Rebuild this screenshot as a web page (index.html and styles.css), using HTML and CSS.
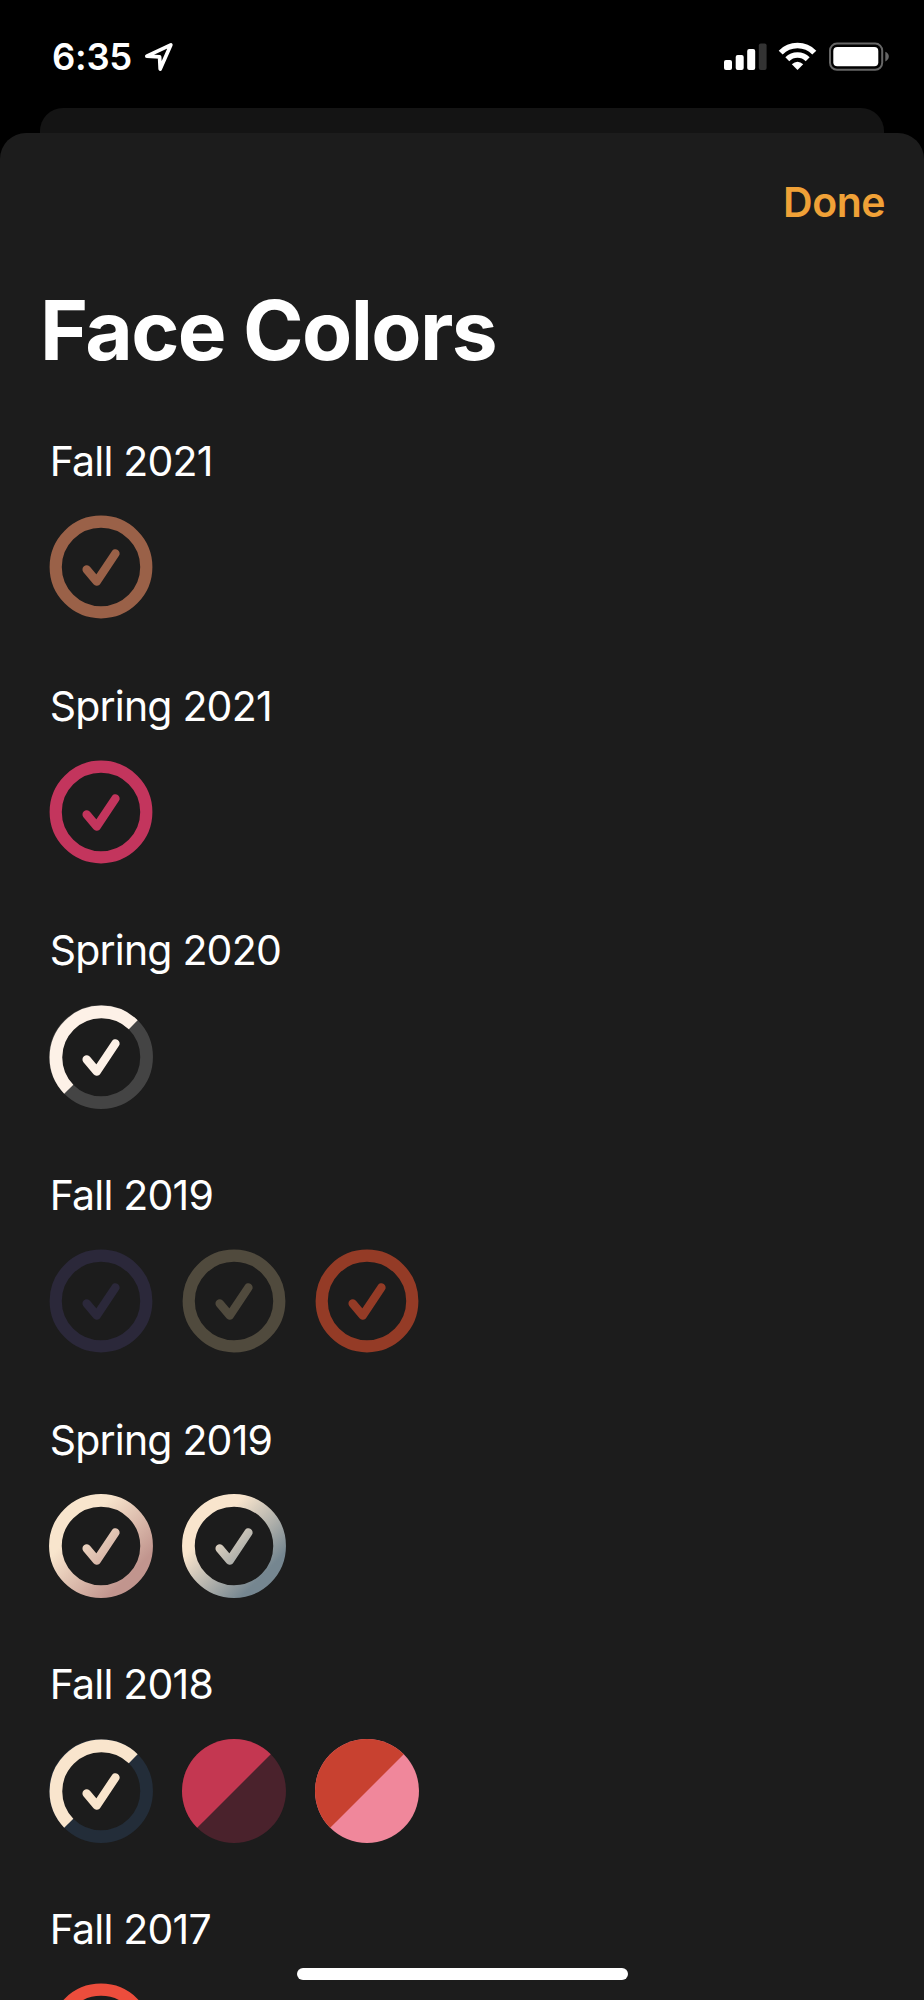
FILE: index.html
```html
<!DOCTYPE html>
<html lang="en">
<head>
<meta charset="utf-8">
<title>Face Colors</title>
<link rel="stylesheet" href="styles.css">
</head>
<body>
<svg class="defs" width="0" height="0" aria-hidden="true">
  <defs>
    <linearGradient id="rose" gradientUnits="userSpaceOnUse" x1="26" y1="26" x2="84" y2="84"><stop offset="0.1" stop-color="#f8e5cd"/><stop offset="0.95" stop-color="#c1958e"/></linearGradient>
    <linearGradient id="steel" gradientUnits="userSpaceOnUse" x1="26" y1="26" x2="84" y2="84"><stop offset="0.1" stop-color="#f9e5cd"/><stop offset="0.95" stop-color="#758690"/></linearGradient>
    <symbol id="full" viewBox="0 0 104 104"><circle cx="52" cy="52" r="45.3" fill="none" stroke="currentColor" stroke-width="12.2"/><path class="tick" d="M37.7 54.4 47.8 66.4 66.4 38.5"/></symbol>
    <symbol id="half" viewBox="0 0 104 104"><circle class="base" cx="52" cy="52" r="45.6" fill="none" stroke-width="12.7"/><path d="M19.76 84.24A45.6 45.6 0 0 1 84.24 19.76" fill="none" stroke="currentColor" stroke-width="12.7"/><path class="tick" d="M37.7 54.4 47.8 66.4 66.4 38.5"/></symbol>
    <symbol id="duo" viewBox="0 0 104 104"><circle class="disc" cx="52" cy="52" r="52"/><path d="M15.23 88.77A52 52 0 0 1 88.77 15.23Z" fill="currentColor"/></symbol>
  </defs>
</svg>
<div class="screen">
  <header class="status">
    <div class="clock"><span class="time">6:35</span>
      <svg class="location" width="30" height="31" viewBox="0 0 30 31"><path d="M2.8 15.2 26.8 3.9 16.2 28 15.6 15.9Z"/></svg>
    </div>
    <svg class="indicators" width="170" height="32" viewBox="0 0 170 32">
      <g fill="#fff"><rect x="4" y="20" width="8" height="10" rx="2"/><rect x="15.7" y="15" width="8" height="15" rx="2"/><rect x="27.2" y="9" width="8" height="21" rx="2"/></g>
      <rect x="38.8" y="3.5" width="7.8" height="26.5" rx="2" fill="#333"/>
      <g fill="none" stroke="#fff" stroke-width="5.6"><path d="M60.7 12.6A23.6 23.6 0 0 1 94.3 12.6"/><path d="M67.3 19.2A14.6 14.6 0 0 1 87.7 19.2"/></g>
      <path d="M77.5 30 71.8 24.2Q77.5 19.2 83.2 24.2Z" fill="#fff"/>
      <rect x="110" y="3.6" width="52.2" height="26.2" rx="7" fill="none" stroke="#666" stroke-width="2"/>
      <rect x="113.3" y="7" width="45" height="19.2" rx="4" fill="#fff"/>
      <path d="M165.3 11.8C170 13.6 170 19.6 165.3 21.4Z" fill="#666"/>
    </svg>
  </header>
  <div class="back-sheet"></div>
  <main class="sheet">
    <nav class="toolbar"><a class="done">Done</a></nav>
    <h1 class="title">Face Colors</h1>
    <div class="groups">
      <section class="group"><h2 class="season">Fall 2021</h2><div class="swatches"><svg class="swatch bronze"><use href="#full"/></svg></div></section>
      <section class="group"><h2 class="season">Spring 2021</h2><div class="swatches"><svg class="swatch magenta"><use href="#full"/></svg></div></section>
      <section class="group"><h2 class="season">Spring 2020</h2><div class="swatches"><svg class="swatch cream"><use href="#half"/></svg></div></section>
      <section class="group"><h2 class="season">Fall 2019</h2><div class="swatches"><svg class="swatch indigo"><use href="#full"/></svg><svg class="swatch khaki"><use href="#full"/></svg><svg class="swatch rust"><use href="#full"/></svg></div></section>
      <section class="group"><h2 class="season">Spring 2019</h2><div class="swatches">
        <svg class="swatch" viewBox="0 0 104 104"><circle cx="52" cy="52" r="45.6" fill="none" stroke="url(#rose)" stroke-width="12.7"/><path class="tick" stroke="url(#rose)" d="M37.7 54.4 47.8 66.4 66.4 38.5"/></svg>
        <svg class="swatch" viewBox="0 0 104 104"><circle cx="52" cy="52" r="45.6" fill="none" stroke="url(#steel)" stroke-width="12.7"/><path class="tick" stroke="url(#steel)" d="M37.7 54.4 47.8 66.4 66.4 38.5"/></svg></div></section>
      <section class="group"><h2 class="season">Fall 2018</h2><div class="swatches"><svg class="swatch navy"><use href="#half"/></svg><svg class="swatch berry"><use href="#duo"/></svg><svg class="swatch coral"><use href="#duo"/></svg></div></section>
      <section class="group"><h2 class="season">Fall 2017</h2><div class="swatches"><svg class="swatch red"><use href="#full"/></svg></div></section>
    </div>
  </main>
  <div class="home-bar"></div>
</div>
</body>
</html>
```

FILE: styles.css
```css
* { box-sizing: border-box; }
body { margin: 0; background: #000; font-family: Inter, "Liberation Sans", sans-serif; color: #fff; }
.defs { display: block; }
.screen { position: relative; width: 924px; height: 2000px; overflow: hidden; display: flex; flex-direction: column; }
.status { height: 108px; flex: none; display: flex; justify-content: space-between; align-items: flex-start; padding: 35px 34px 0 52px; }
.clock { display: flex; gap: 12px; }
.time { font-size: 36.5px; line-height: 44px; font-weight: 600; letter-spacing: -0.3px; }
.location { margin-top: 6px; fill: none; stroke: #fff; stroke-width: 3.7; stroke-linejoin: round; }
.indicators { margin-top: 5px; }
.back-sheet { flex: none; height: 25px; margin: 0 40px; background: #141414; border-radius: 23px 23px 0 0; }
.sheet { flex: 1; min-height: 0; overflow: hidden; background: #1c1c1c; border-radius: 26px 26px 0 0; padding-top: 44px; }
.toolbar { display: flex; justify-content: flex-end; padding-right: 39px; height: 50px; }
.done { color: #f0a137; font-size: 41px; line-height: 51px; font-weight: 600; letter-spacing: -0.5px; }
.title { margin: 54px 0 0 40px; font-size: 82px; line-height: 100px; font-weight: 700; letter-spacing: -1.6px; white-space: nowrap; }
.groups { display: flex; flex-direction: column; gap: 61.5px; padding: 55px 0 0 49px; }
.group { display: flex; flex-direction: column; gap: 29.2px; }
.season { margin: 0; padding-left: 0.7px; font-size: 41px; line-height: 50px; font-weight: 400; letter-spacing: -0.8px; white-space: nowrap; }
.swatches { display: flex; gap: 29px; height: 104px; }
.swatch { display: block; width: 104px; height: 104px; }
.tick { fill: none; stroke-width: 8.5; stroke-linecap: round; stroke-linejoin: round; }
symbol .tick { stroke: currentColor; }
.base { stroke: var(--second); }
.disc { fill: var(--second); }
.bronze { color: #9a6148; }
.magenta { color: #c3355d; }
.cream { color: #fdf1e7; --second: #444; }
.indigo { color: #2b283a; }
.khaki { color: #504a3d; }
.rust { color: #943b26; }
.navy { color: #f9e5cd; --second: #232d39; }
.berry { color: #c43751; --second: #4a222c; }
.coral { color: #c84130; --second: #f0879b; }
.red { color: #ec4d3c; }
.home-bar { position: absolute; left: 297px; top: 1968px; width: 331px; height: 12.3px; border-radius: 7px; background: #fff; }
```
